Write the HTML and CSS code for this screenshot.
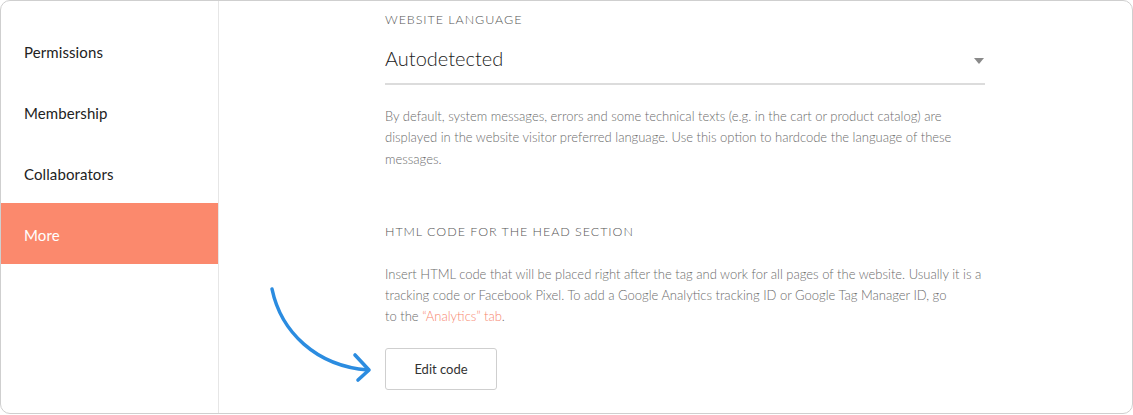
FILE: index.html
```html
<!DOCTYPE html>
<html>
<head>
<meta charset="utf-8">
<link rel="stylesheet" href="styles.css">
</head>
<body>
<div class="frame">
  <nav class="sidebar">
    <div class="nav-item">Permissions</div>
    <div class="nav-item">Membership</div>
    <div class="nav-item">Collaborators</div>
    <div class="nav-item active">More</div>
  </nav>
  <main class="content">
    <section class="field">
      <div class="label">WEBSITE LANGUAGE</div>
      <div class="select">
        <span class="select-value">Autodetected</span>
        <span class="caret"></span>
      </div>
      <p class="help">By default, system messages, errors and some technical texts (e.g. in the cart or product catalog) are displayed in the website visitor preferred language. Use this option to hardcode the language of these messages.</p>
    </section>
    <section class="field second">
      <div class="label">HTML CODE FOR THE HEAD SECTION</div>
      <p class="help wide">Insert HTML code that will be placed right after the tag and work for all pages of the website. Usually it is a tracking code or Facebook Pixel. To add a Google Analytics tracking ID or Google Tag Manager ID, go<br>to the <a class="link">“Analytics” tab</a>.</p>
      <button class="btn">Edit code</button>
    </section>
  </main>
  <svg class="pointer" width="120" height="110" viewBox="0 0 120 110">
    <path d="M11 7 C 20 50, 55 84, 107 88" fill="none" stroke="#2b8ce0" stroke-width="3.5" stroke-linecap="round"/>
    <path d="M94 73 L108 88 L97 98" fill="none" stroke="#2b8ce0" stroke-width="3.6" stroke-linecap="round" stroke-linejoin="round"/>
  </svg>
</div>
</body>
</html>
```
FILE: styles.css
```css
* { box-sizing: border-box; }
html, body { margin: 0; padding: 0; background: #fff; }
body {
  font-family: "Lato", "Open Sans", sans-serif;
  width: 1133px;
  height: 415px;
  overflow: hidden;
}
.frame {
  position: relative;
  display: flex;
  width: 1133px;
  height: 414px;
  border: 1px solid #cfcfcf;
  border-radius: 10px;
  overflow: hidden;
}
.sidebar {
  width: 218px;
  flex: none;
  border-right: 1px solid #e6e6e6;
  padding-top: 19px;
}
.nav-item {
  height: 61px;
  display: flex;
  align-items: center;
  padding-left: 23px;
  padding-top: 2px;
  font-size: 15px;
  color: #222;
  letter-spacing: 0.1px;
}
.nav-item.active {
  background: #fb896d;
  color: #fff;
}
.content {
  flex: 1;
  padding-left: 166px;
  padding-top: 11px;
}
.field { width: 600px; }
.label {
  font-size: 12.5px;
  letter-spacing: 0.95px;
  color: #555;
  line-height: 16px;
  font-weight: 300;
}
.select {
  display: flex;
  align-items: center;
  justify-content: space-between;
  height: 49px;
  border-bottom: 2px solid #dcdcdc;
  margin-top: 8px;
}
.select-value {
  font-size: 20px;
  color: #222;
  font-weight: 300;
  padding-bottom: 3px;
}
.caret {
  width: 0; height: 0;
  border-left: 5px solid transparent;
  border-right: 5px solid transparent;
  border-top: 6px solid #8a8a8a;
  margin-right: 1px;
  margin-top: 2px;
}
.help {
  margin: 21px 0 0;
  font-size: 13px;
  line-height: 21.3px;
  color: #6c6c6c;
  font-weight: 300;
}
.second { margin-top: 54px; }
.help.wide { margin-top: 24px; }
.link { color: #f7876f; }
.btn {
  display: block;
  margin-top: 20px;
  width: 112px;
  height: 42px;
  border: 1px solid #cfcfcf;
  border-radius: 3px;
  background: #fff;
  font-family: inherit;
  font-size: 13px;
  color: #333;
}
.pointer {
  position: absolute;
  left: 260px;
  top: 281px;
}
```
